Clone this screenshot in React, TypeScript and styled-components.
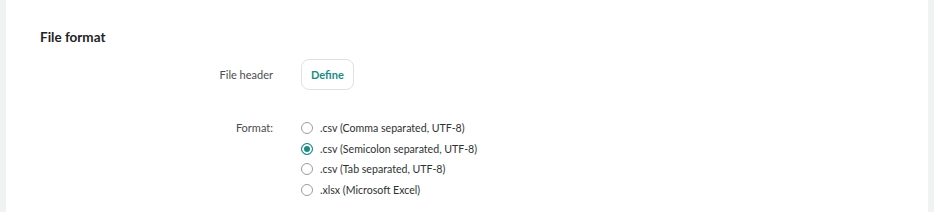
import React from "react";
import styled, { createGlobalStyle } from "styled-components";

const Global = createGlobalStyle`
  html, body { margin: 0; padding: 0; background: #f1f2f2; }
  body { font-family: Lato, "Noto Sans", sans-serif; }
`;

const Page = styled.div`
  padding: 0 6px;
  height: 212px;
  box-sizing: border-box;
`;

const Card = styled.section`
  background: #ffffff;
  height: 100%;
  padding: 29px 34px 0;
  box-sizing: border-box;
`;

const Heading = styled.h2`
  margin: 0;
  font-size: 13.5px;
  font-weight: 700;
  color: #1f2224;
  line-height: 16px;
`;

const Form = styled.div`
  display: grid;
  grid-template-columns: 233px 1fr;
  column-gap: 28px;
  row-gap: 28px;
  margin-top: 14px;
`;

const Label = styled.div<{ $center?: boolean }>`
  text-align: right;
  font-size: 11px;
  color: #4a4d50;
  align-self: ${(p) => (p.$center ? "center" : "start")};
  line-height: 20px;
`;

const Button = styled.button`
  justify-self: start;
  height: 31px;
  padding: 0 9px;
  border: 1px solid #dfe1e2;
  border-radius: 8px;
  background: #fff;
  color: #188c84;
  font-family: inherit;
  font-size: 11px;
  font-weight: 700;
`;

const Group = styled.div`
  display: flex;
  flex-direction: column;
  gap: 0.6px;
`;

const Option = styled.label`
  display: flex;
  align-items: center;
  gap: 7px;
  height: 20px;
  line-height: 20px;
  font-size: 10.6px;
  color: #2e3133;
`;

const Dot = styled.span<{ $checked?: boolean }>`
  width: 12px;
  height: 12px;
  box-sizing: border-box;
  border-radius: 50%;
  border: 1px solid ${(p) => (p.$checked ? "#188c84" : "#9a9d9f")};
  background: ${(p) => (p.$checked ? "#188c84" : "#fff")};
  box-shadow: ${(p) => (p.$checked ? "inset 0 0 0 2px #fff" : "none")};
  flex: none;
`;

const options = [
  ".csv (Comma separated, UTF-8)",
  ".csv (Semicolon separated, UTF-8)",
  ".csv (Tab separated, UTF-8)",
  ".xlsx (Microsoft Excel)",
];

export default function App() {
  return (
    <>
      <Global />
      <Page>
        <Card>
          <Heading>File format</Heading>
          <Form>
            <Label $center>File header</Label>
            <Button>Define</Button>
            <Label>Format:</Label>
            <Group>
              {options.map((o, i) => (
                <Option key={o}>
                  <Dot $checked={i === 1} />
                  {o}
                </Option>
              ))}
            </Group>
          </Form>
        </Card>
      </Page>
    </>
  );
}
